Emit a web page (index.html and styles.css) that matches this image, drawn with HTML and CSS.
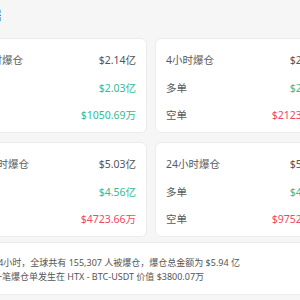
FILE: index.html
```html
<!DOCTYPE html>
<html lang="zh-CN">
<head>
<meta charset="utf-8">
<link rel="stylesheet" href="styles.css">
</head>
<body>
<div class="page">
  <div class="title">爆仓数据</div>
  <div class="grid">
    <div class="card">
      <div class="row"><span class="label">1小时爆仓</span><span class="val">$2.14亿</span></div>
      <div class="row"><span class="label">多单</span><span class="val up">$2.03亿</span></div>
      <div class="row"><span class="label">空单</span><span class="val up">$1050.69万</span></div>
    </div>
    <div class="card">
      <div class="row"><span class="label">4小时爆仓</span><span class="val">$2.66亿</span></div>
      <div class="row"><span class="label">多单</span><span class="val up">$2.45亿</span></div>
      <div class="row"><span class="label">空单</span><span class="val down">$2123.37万</span></div>
    </div>
    <div class="card">
      <div class="row"><span class="label">12小时爆仓</span><span class="val">$5.03亿</span></div>
      <div class="row"><span class="label">多单</span><span class="val up">$4.56亿</span></div>
      <div class="row"><span class="label">空单</span><span class="val down">$4723.66万</span></div>
    </div>
    <div class="card">
      <div class="row"><span class="label">24小时爆仓</span><span class="val">$5.94亿</span></div>
      <div class="row"><span class="label">多单</span><span class="val up">$4.96亿</span></div>
      <div class="row"><span class="label">空单</span><span class="val down">$9752.41万</span></div>
    </div>
  </div>
  <div class="summary">
    <div class="line">过去24小时，全球共有 155,307 人被爆仓，爆仓总金额为 $5.94 亿</div>
    <div class="line">最大一笔爆仓单发生在 HTX - BTC-USDT 价值 $3800.07万</div>
  </div>
</div>
</body>
</html>
```
FILE: styles.css
```css
html, body {
  margin: 0;
  padding: 0;
  background: #f6f6f6;
  overflow: hidden;
}
body {
  font-family: "Noto Sans", "Noto Sans CJK SC", sans-serif;
  color: #555;
}
.page {
  margin-left: -36px;
  width: 374px;
  padding-top: 6px;
}
.title {
  margin-left: -11px;
  font-size: 12px;
  line-height: 20px;
  font-weight: 700;
  color: #222;
  margin-bottom: 12px;
}
.grid {
  display: grid;
  grid-template-columns: 183px 183px;
  column-gap: 8px;
  row-gap: 9px;
}
.card {
  background: #fff;
  border: 1px solid #ececec;
  border-radius: 6px;
  padding: 13px 10px 9px;
  display: flex;
  flex-direction: column;
  gap: 11.5px;
}
.row {
  display: flex;
  justify-content: space-between;
  font-size: 10.5px;
  line-height: 16px;
}
.label {
  color: #5a5a5a;
}
.val {
  color: #555;
}
.up {
  color: #33bc8f;
}
.down {
  color: #f0485d;
}
.summary {
  margin-top: 5px;
  background: #fff;
  border: 1px solid #ececec;
  border-radius: 6px;
  padding: 13px 10px 10px;
  font-size: 9px;
  line-height: 14px;
  color: #555;
}
```
